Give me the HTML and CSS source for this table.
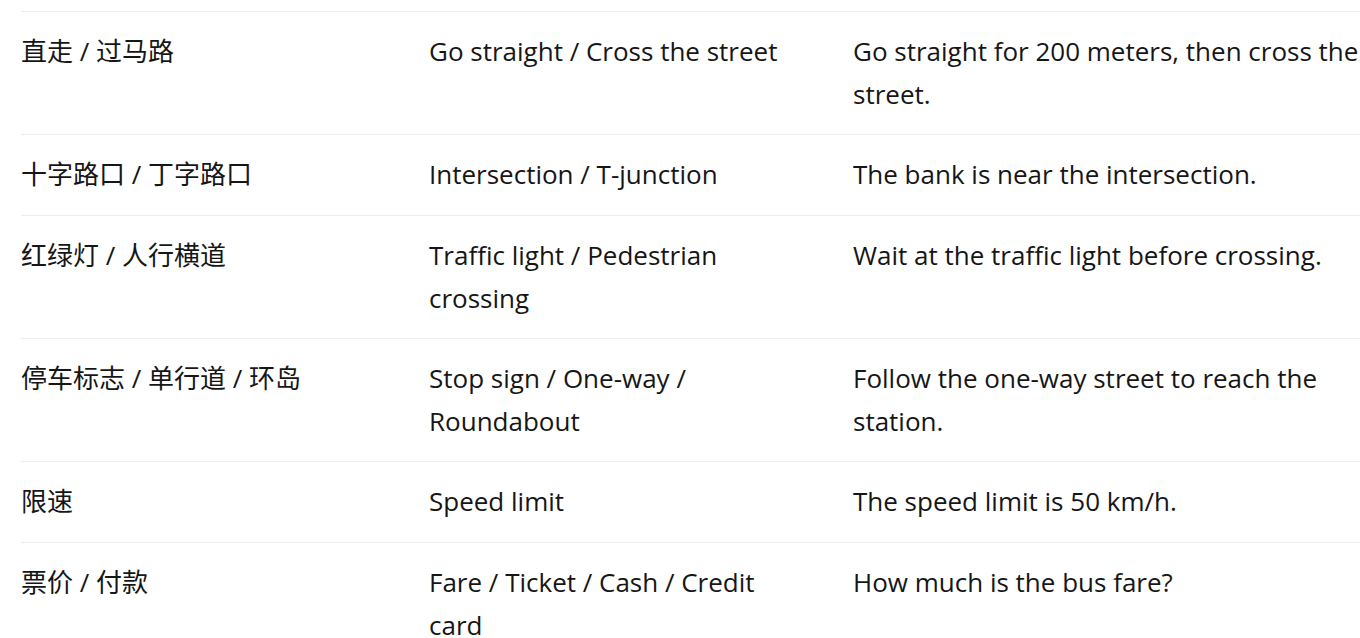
FILE: index.html
```html
<!DOCTYPE html>
<html lang="zh-CN">
<head>
<meta charset="utf-8">
<title>Directions vocabulary</title>
<link rel="stylesheet" href="styles.css">
</head>
<body>
<div class="wrap">
  <table class="vocab">
    <colgroup>
      <col class="c1">
      <col class="c2">
      <col class="c3">
    </colgroup>
    <tbody>
      <tr>
        <td class="zh">直走 / 过马路</td>
        <td class="en">Go straight / Cross the street</td>
        <td class="ex">Go straight for 200 meters, then cross the street.</td>
      </tr>
      <tr>
        <td class="zh">十字路口 / 丁字路口</td>
        <td class="en">Intersection / T-junction</td>
        <td class="ex">The bank is near the intersection.</td>
      </tr>
      <tr>
        <td class="zh">红绿灯 / 人行横道</td>
        <td class="en">Traffic light / Pedestrian crossing</td>
        <td class="ex">Wait at the traffic light before crossing.</td>
      </tr>
      <tr>
        <td class="zh">停车标志 / 单行道 / 环岛</td>
        <td class="en">Stop sign / One-way / Roundabout</td>
        <td class="ex">Follow the one-way street to reach the station.</td>
      </tr>
      <tr>
        <td class="zh">限速</td>
        <td class="en">Speed limit</td>
        <td class="ex">The speed limit is 50 km/h.</td>
      </tr>
      <tr>
        <td class="zh">票价 / 付款</td>
        <td class="en">Fare / Ticket / Cash / Credit card</td>
        <td class="ex">How much is the bus fare?</td>
      </tr>
    </tbody>
  </table>
</div>
</body>
</html>
```

FILE: styles.css
```css
html, body {
  margin: 0;
  padding: 0;
  background: #ffffff;
}

body {
  overflow: hidden;
  font-family: "Open Sans", "Noto Sans CJK SC", sans-serif;
  color: #161616;
}

.wrap {
  padding: 11px 0 0 21px;
  width: 1420px;
}

.vocab {
  border-collapse: collapse;
  table-layout: fixed;
  width: 1372px;
  border-top: 1px solid #ededed;
}

.c1 { width: 408px; }
.c2 { width: 424px; }
.c3 { width: 540px; }

.vocab td {
  padding: 18px 48px 18px 0;
  border-bottom: 1px solid #ededed;
  vertical-align: top;
  font-size: 26px;
  line-height: 43.2px;
  text-align: left;
}

.vocab td.en {
  padding-right: 64px;
}

.vocab td.ex {
  padding-right: 20px;
}
```
